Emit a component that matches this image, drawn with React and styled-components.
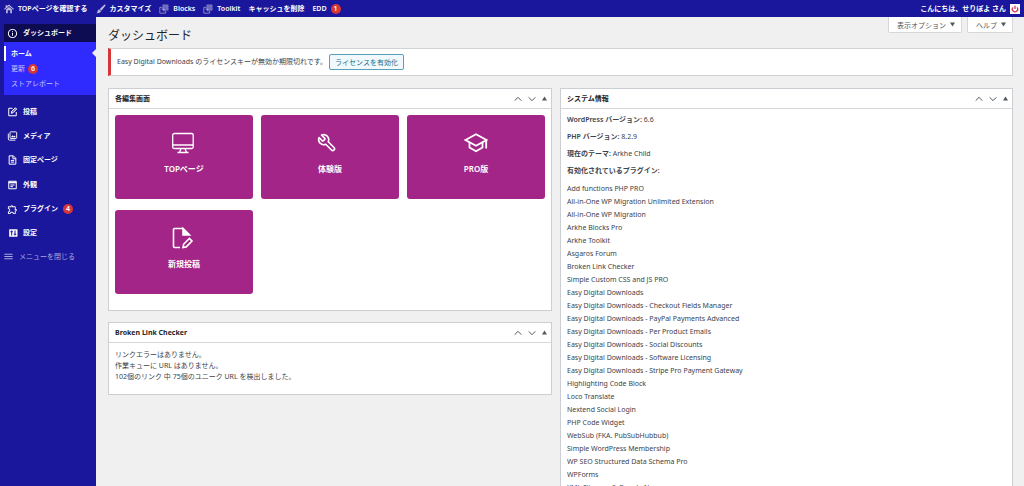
import React from 'react'
import styled, { createGlobalStyle, css } from 'styled-components'
import { MdInfoOutline, MdOutlineExtension, MdMenu } from 'react-icons/md'
import { LuWrench } from 'react-icons/lu'

const GlobalStyle = createGlobalStyle`
  * {
    box-sizing: border-box;
  }
  body {
    margin: 0;
    background: #f0f0f1;
    color: #3c434a;
    font-family: "Noto Sans", "Noto Sans CJK JP", sans-serif;
    font-size: 7px;
    line-height: 10px;
  }
  a {
    color: inherit;
    text-decoration: none;
  }
  button {
    font-family: inherit;
    cursor: pointer;
  }
`

const plugins = [
  'Add functions PHP PRO',
  'All-in-One WP Migration Unlimited Extension',
  'All-in-One WP Migration',
  'Arkhe Blocks Pro',
  'Arkhe Toolkit',
  'Asgaros Forum',
  'Broken Link Checker',
  'Simple Custom CSS and JS PRO',
  'Easy Digital Downloads',
  'Easy Digital Downloads - Checkout Fields Manager',
  'Easy Digital Downloads - PayPal Payments Advanced',
  'Easy Digital Downloads - Per Product Emails',
  'Easy Digital Downloads - Social Discounts',
  'Easy Digital Downloads - Software Licensing',
  'Easy Digital Downloads - Stripe Pro Payment Gateway',
  'Highlighting Code Block',
  'Loco Translate',
  'Nextend Social Login',
  'PHP Code Widget',
  'WebSub (FKA. PubSubHubbub)',
  'Simple WordPress Membership',
  'WP SEO Structured Data Schema Pro',
  'WPForms',
  'XML Sitemap & Google News',
]

const Svg = ({ size = 10, width = 2, children }) => (
  <svg width={size} height={size} viewBox="0 0 24 24" fill="none" stroke="currentColor" strokeWidth={width} aria-hidden="true">
    {children}
  </svg>
)

const HomeIcon = () => (
  <Svg width={2.5}>
    <path d="M1 13L12 3l11 10" />
    <path d="M4 3h4v6H4zM5 13l7-6 7 6v9h-4v-7H9v7H5z" fill="currentColor" stroke="none" />
  </Svg>
)

const BrushIcon = () => (
  <svg width="10" height="10" viewBox="0 0 24 24" fill="currentColor" aria-hidden="true">
    <path d="M22 1c1 1 1 2 0 4l-9 11-4-4L20 2c1-1 1.500-1 2-1z" />
    <path d="M8 13l4 4c-1 4-5 6-11 5 3-1 2-3 3-6 1-2 2-3 4-3z" />
  </svg>
)

const BlocksIcon = () => (
  <Svg width={1.6}>
    <path d="M9 2h13v13H9z" fill="currentColor" fillOpacity="0.5" strokeDasharray="2 2" />
    <path d="M7 8H2v14h14v-5" />
    <path d="M6 12h6v6" />
  </Svg>
)

const EditIcon = () => (
  <Svg width={2.4}>
    <path d="M12 3H3v18h18v-9" />
    <path d="M9 15l1-5 9-8 3 3-9 9z" fill="currentColor" fillOpacity="0.35" />
  </Svg>
)

const MediaIcon = () => (
  <Svg width={2.2}>
    <rect x="6" y="2" width="16" height="16" rx="2" />
    <path d="M2 6v13a3 3 0 0 0 3 3h14" />
    <path d="M8 15l4-5 3 3 2-2 3 4z" fill="currentColor" stroke="none" />
  </Svg>
)

const PageIcon = () => (
  <Svg width={2.4}>
    <path d="M4 2h10l6 6v14H4z" />
    <path d="M13 2v7h7M8 13h8M8 17h8" />
  </Svg>
)

const LookIcon = () => (
  <Svg width={2.4}>
    <path d="M3 3h18v18H3z" />
    <path d="M3 6h18" strokeWidth="4" />
    <path d="M7 12h10M7 16h6" />
  </Svg>
)

const SettingIcon = () => (
  <svg width="10" height="10" viewBox="0 0 24 24" aria-hidden="true">
    <rect x="4" y="3" width="20" height="18" rx="1" fill="currentColor" />
    <path d="M10 6v12M7 9h6M18 6v12M15 15h6" stroke="#1b179c" strokeWidth="2.4" fill="none" />
  </svg>
)

const MonitorIcon = () => (
  <Svg size={24} width={1.3}>
    <rect x="0.700" y="2.500" width="20.500" height="15" rx="1.500" />
    <path d="M1 14h20M9 17.500l-1.500 4M13 17.500l1.500 4M5.500 21.500h11" />
  </Svg>
)

const CapIcon = () => (
  <Svg size={24} width={1.8}>
    <path d="M1.500 9L12 3.200 22.500 9 12 14.800z" />
    <path d="M5.500 11v5.500L12 20.200l6.500-3.700V11M22.200 9v8.500" />
  </Svg>
)

const NewPostIcon = () => (
  <Svg size={24} width={1.6}>
    <path d="M8 21.500H2.500a1 1 0 0 1-1-1v-17a1 1 0 0 1 1-1H11l6 6" />
    <path d="M11 2.500l6.500 6.500H11z" fill="currentColor" />
    <path d="M11 21.500l.6-3.200 5.800-5.800 2.600 2.600-5.800 5.800z" />
  </Svg>
)

const Chevron = ({ down }) => (
  <Svg size={8} width={3}>
    <path d={down ? 'M2 7l10 10L22 7' : 'M2 17L12 7l10 10'} />
  </Svg>
)

const Triangle = ({ up }) => (
  <svg width="5" height="5" viewBox="0 0 10 10" fill="currentColor" aria-hidden="true">
    <path d={up ? 'M5 1l5 8H0z' : 'M0 1h10L5 9z'} />
  </svg>
)

const menus = [
  { name: '投稿', icon: <EditIcon /> },
  { name: 'メディア', icon: <MediaIcon /> },
  { name: '固定ページ', icon: <PageIcon /> },
  { name: '外観', icon: <LookIcon />, group: true },
  { name: 'プラグイン', icon: <MdOutlineExtension size={11} />, count: 4 },
  { name: '設定', icon: <SettingIcon /> },
]

const cards = [
  { name: 'TOPページ', icon: <MonitorIcon /> },
  { name: '体験版', icon: <LuWrench size={20} strokeWidth={2} />, flip: true },
  { name: 'PRO版', icon: <CapIcon /> },
  { name: '新規投稿', icon: <NewPostIcon /> },
]

const Panel = ({ title, children }) => (
  <Box>
    <BoxHead>
      <h2>{title}</h2>
      <BoxButton aria-label="上に移動"><Chevron /></BoxButton>
      <BoxButton aria-label="下に移動"><Chevron down /></BoxButton>
      <BoxButton aria-label="パネルを切り替え"><Triangle up /></BoxButton>
    </BoxHead>
    {children}
  </Box>
)

const App = () => {
  return (
    <>
      <GlobalStyle />
      <AdminBar>
        <BarLink href="#"><HomeIcon />TOPページを確認する</BarLink>
        <BarLink href="#"><BrushIcon />カスタマイズ</BarLink>
        <BarLink href="#"><BlocksIcon />Blocks</BarLink>
        <BarLink href="#"><BlocksIcon />Toolkit</BarLink>
        <BarLink href="#">キャッシュを削除</BarLink>
        <BarLink href="#">EDD<Badge>1</Badge></BarLink>
        <Account href="#">
          こんにちは、せりぽよ さん
          <Avatar>
            <Svg size={8} width={4}>
              <path d="M6 7a8 8 0 1 0 12 0M12 2v10" />
            </Svg>
          </Avatar>
        </Account>
      </AdminBar>

      <Layout>
        <Sidebar>
          <MenuItem href="#" $current><MdInfoOutline size={11} />ダッシュボード</MenuItem>
          <SubMenu>
            <SubItem href="#" $active>ホーム</SubItem>
            <SubItem href="#">更新<Badge>6</Badge></SubItem>
            <SubItem href="#">ストアレポート</SubItem>
          </SubMenu>
          {menus.map((m) => (
            <MenuItem href="#" key={m.name} $group={m.group}>
              {m.icon}
              {m.name}
              {m.count && <Badge>{m.count}</Badge>}
            </MenuItem>
          ))}
          <Collapse><MdMenu size={11} />メニューを閉じる</Collapse>
        </Sidebar>

        <Content>
          <TopRow>
            <h1>ダッシュボード</h1>
            <ScreenTab>表示オプション<Triangle /></ScreenTab>
            <ScreenTab>ヘルプ<Triangle /></ScreenTab>
          </TopRow>

          <Notice>
            Easy Digital Downloads のライセンスキーが無効か期限切れです。
            <LicenseButton>ライセンスを有効化</LicenseButton>
          </Notice>

          <Columns>
            <Column>
              <Panel title="各編集画面">
                <CardGrid>
                  {cards.map((c) => (
                    <Card href="#" key={c.name}>
                      <CardIcon $flip={c.flip}>{c.icon}</CardIcon>
                      {c.name}
                    </Card>
                  ))}
                </CardGrid>
              </Panel>
              <Panel title="Broken Link Checker">
                <LinkStatus>
                  リンクエラーはありません。<br />
                  作業キューに URL はありません。<br />
                  102個のリンク 中 75個のユニーク URL を検出しました。
                </LinkStatus>
              </Panel>
            </Column>
            <Column>
              <Panel title="システム情報">
                <SystemInfo>
                  <p><strong>WordPress バージョン:</strong> 6.6</p>
                  <p><strong>PHP バージョン:</strong> 8.2.9</p>
                  <p><strong>現在のテーマ:</strong> Arkhe Child</p>
                  <p><strong>有効化されているプラグイン:</strong></p>
                  <ul>
                    {plugins.map((p) => <li key={p}>{p}</li>)}
                  </ul>
                </SystemInfo>
              </Panel>
            </Column>
          </Columns>
        </Content>
      </Layout>
    </>
  )
}

const AdminBar = styled.header`
  display: flex;
  align-items: center;
  gap: 8px;
  height: 17px;
  padding: 0 4px;
  background: #1b179c;
  color: #fff;
  font-weight: 600;
`

const BarLink = styled.a`
  display: flex;
  align-items: center;
  gap: 4px;
  white-space: nowrap;
  svg {
    opacity: 0.7;
  }
`

const Account = styled(BarLink)`
  margin-left: auto;
  svg {
    opacity: 1;
  }
`

const Avatar = styled.span`
  display: flex;
  padding: 1px;
  background: #fff;
  color: #d0405c;
`

const Badge = styled.span`
  min-width: 10px;
  height: 10px;
  border-radius: 5px;
  background: #d63638;
  color: #fff;
  font-size: 7px;
  font-weight: 600;
  line-height: 10px;
  text-align: center;
`

const Layout = styled.div`
  display: flex;
  align-items: stretch;
  height: calc(100vh - 17px);
  overflow: hidden;
`

const Sidebar = styled.nav`
  flex: none;
  width: 96px;
  padding: 7px 0 0 4px;
  background: #1b179c;
  color: #fff;
`

const MenuItem = styled.a`
  display: flex;
  align-items: center;
  gap: 5px;
  height: ${({ $current }) => ($current ? '18px' : '24px')};
  margin-top: ${({ $group }) => ($group ? '1px' : '0')};
  padding-left: 3px;
  background: ${({ $current }) => ($current ? '#0d0b52' : 'transparent')};
  font-weight: 600;
  svg {
    width: 11px;
  }
`

const SubMenu = styled.div`
  margin-bottom: 5px;
  padding: 4px 0;
  background: #2f2bff;
`

const SubItem = styled.a`
  position: relative;
  display: flex;
  align-items: center;
  gap: 3px;
  height: 15px;
  padding-left: 7px;
  color: #c4c3ff;
  ${({ $active }) => $active && css`
    padding-left: 5px;
    border-left: 2px solid #fff;
    color: #fff;
    font-weight: 700;
    &::after {
      content: '';
      position: absolute;
      top: 3px;
      right: 0;
      border: 4px solid transparent;
      border-left-width: 0;
      border-right-color: #f0f0f1;
    }
  `}
`

const Collapse = styled.button`
  display: flex;
  align-items: center;
  gap: 5px;
  height: 22px;
  padding: 0;
  margin-left: -1px;
  border: none;
  background: none;
  color: #a9a7dd;
  font-size: 7px;
`

const Content = styled.main`
  flex: 1;
  min-width: 0;
  padding: 0 11px 0 12px;
`

const TopRow = styled.div`
  display: flex;
  align-items: flex-start;
  gap: 5px;
  height: 31px;
  h1 {
    flex: 1;
    margin: 10px 0 0;
    color: #1d2327;
    font-size: 12px;
    font-weight: 400;
    line-height: 18px;
  }
`

const ScreenTab = styled.button`
  display: flex;
  align-items: center;
  gap: 4px;
  height: 16px;
  padding: 0 6px 0 8px;
  border: 1px solid #d5d7da;
  border-top: none;
  border-radius: 0 0 2px 2px;
  background: #fff;
  color: #50575e;
  font-size: 7px;
`

const Notice = styled.div`
  display: flex;
  align-items: center;
  gap: 2px;
  height: 28px;
  padding-left: 6px;
  border: 1px solid #d0d3d6;
  border-left: 3px solid #d63638;
  background: #fff;
`

const LicenseButton = styled.button`
  height: 16px;
  padding: 0 5px;
  border: 1px solid #5a9fb8;
  border-radius: 2px;
  background: #f2f9fc;
  color: #13708f;
  font-size: 7px;
`

const Columns = styled.div`
  display: grid;
  grid-template-columns: 444fr 453fr;
  gap: 8px;
  align-items: start;
  margin-top: 12px;
`

const Column = styled.div`
  display: grid;
  gap: 11px;
`

const Box = styled.section`
  border: 1px solid #cbced2;
  background: #fff;
`

const BoxHead = styled.div`
  display: flex;
  align-items: center;
  gap: 6px;
  height: 20px;
  padding: 0 4px 0 6px;
  border-bottom: 1px solid #d5d7da;
  h2 {
    flex: 1;
    margin: 0;
    color: #1d2327;
    font-size: 7px;
    font-weight: 700;
  }
`

const BoxButton = styled.button`
  display: flex;
  padding: 0;
  border: none;
  background: none;
  color: #50575e;
`

const CardGrid = styled.div`
  display: grid;
  grid-template-columns: repeat(3, 1fr);
  gap: 11px 8px;
  padding: 6px 6px 16px;
`

const Card = styled.a`
  display: flex;
  flex-direction: column;
  align-items: center;
  gap: 9px;
  height: 84px;
  padding-top: 16px;
  border-radius: 3px;
  background: #a32587;
  color: #fff;
  font-size: 8px;
  font-weight: 600;
`

const CardIcon = styled.span`
  display: flex;
  align-items: center;
  height: 24px;
  ${({ $flip }) => $flip && css`
    padding-left: 6px;
    transform: scaleX(-1);
  `}
`

const LinkStatus = styled.p`
  margin: 0;
  padding: 6px 6px 12px;
  line-height: 11px;
`

const SystemInfo = styled.div`
  padding: 5px 6px;
  p {
    margin: 0 0 6px;
    line-height: 11px;
  }
  strong {
    font-weight: 600;
  }
  ul {
    margin: 0;
    padding: 0;
    list-style: none;
  }
  li {
    line-height: 13px;
  }
`

export default App
